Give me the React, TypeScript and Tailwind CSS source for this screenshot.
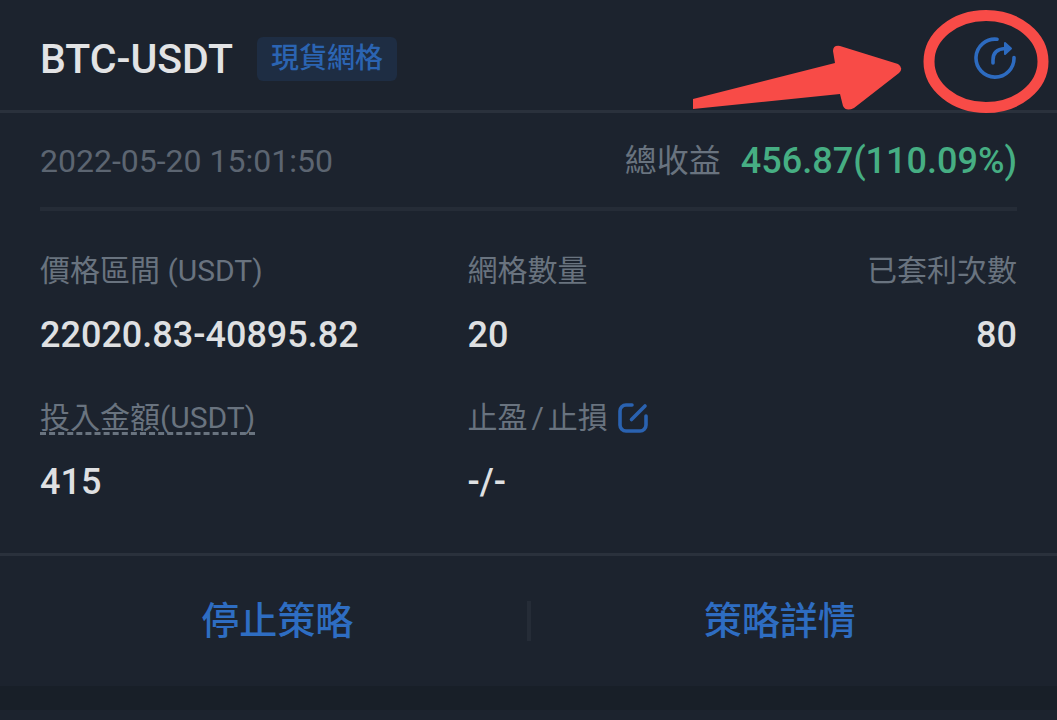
import type { ReactNode } from "react";

const strategy = {
  pair: "BTC-USDT",
  type: "現貨網格",
  createdAt: "2022-05-20 15:01:50",
  profit: "456.87(110.09%)",
  range: "22020.83-40895.82",
  grids: "20",
  arbitrages: "80",
  invested: "415",
  stops: "-/-",
};

function ShareIcon() {
  return (
    <svg width="44" height="44" viewBox="0 0 44 44" fill="none" aria-hidden="true">
      <path d="M24 2.200A19 19 0 1 0 41 20.500" stroke="#2d6bc0" strokeWidth="3.6" strokeLinecap="round" />
      <path d="M20 26v-3c0-7 4-11 12-11.500" stroke="#2d6bc0" strokeWidth="3.6" strokeLinecap="round" />
      <path d="M32 6l6 5.500-6 5.500z" fill="#2d6bc0" stroke="#2d6bc0" strokeWidth="2" strokeLinejoin="round" />
    </svg>
  );
}

function EditIcon() {
  return (
    <svg width="30" height="30" viewBox="0 0 30 30" fill="none" aria-hidden="true">
      <path
        d="M14 2H8a6 6 0 0 0-6 6v14a6 6 0 0 0 6 6h14a6 6 0 0 0 6-6v-9"
        stroke="#2a62b0"
        strokeWidth="3.6"
        strokeLinecap="round"
      />
      <path d="M13.500 16.500L27 3" stroke="#2a62b0" strokeWidth="3.6" strokeLinecap="round" />
    </svg>
  );
}

function Stat({ label, value, className = "" }: { label: ReactNode; value: string; className?: string }) {
  return (
    <div className={className}>
      <dt className="text-[30px] leading-10 text-[#69737f]">{label}</dt>
      <dd className="mt-6 text-[36px] leading-10 font-medium text-[#dfe0e2]">{value}</dd>
    </div>
  );
}

export default function App() {
  return (
    <main className="min-h-screen bg-[#1c232e] font-['Roboto','Noto_Sans_CJK_TC',sans-serif]">
      <article>
        <header className="relative flex items-center justify-between border-b-[3px] border-[#2a313c] px-10 pt-[37px] pb-[29px]">
          <div className="flex items-center gap-6">
            <h1 className="text-[41px] leading-[44px] font-medium text-[#e2e3e5]">{strategy.pair}</h1>
            <span className="rounded-md bg-[#1e2d43] px-3.5 py-1 text-[28px] leading-9 font-medium text-[#2b64b2]">
              {strategy.type}
            </span>
          </div>
          <button type="button" aria-label="分享">
            <ShareIcon />
          </button>

          {/* hint pointing at the share button */}
          <svg className="pointer-events-none absolute top-2 right-2" width="358" height="106" viewBox="0 0 358 106" fill="none" aria-hidden="true">
            <path d="M2 91L144 55L142 43Q142 37 149 38L207 56Q213 60 208 65L163 100Q155 104 152 98L149 86L2 101z" fill="#f84b47" />
            <ellipse cx="295" cy="53.500" rx="57" ry="46" stroke="#f84b47" strokeWidth="11" />
          </svg>
        </header>

        <section className="px-10">
          <div className="flex items-center justify-between border-b-4 border-[#252c37] pt-7 pb-[26px]">
            <time className="text-[32px] leading-10 text-[#5c6571]">{strategy.createdAt}</time>
            <p className="flex items-center gap-5 leading-10">
              <span className="text-[32px] text-[#69737f]">總收益</span>
              <strong className="text-[36px] font-medium text-[#46ae83]">{strategy.profit}</strong>
            </p>
          </div>

          <dl className="grid grid-cols-[7fr_5fr_4fr] gap-y-[43px] pt-10 pb-[51px]">
            <Stat label="價格區間 (USDT)" value={strategy.range} />
            <Stat label="網格數量" value={strategy.grids} />
            <Stat label="已套利次數" value={strategy.arbitrages} className="text-right" />
            <Stat
              label={
                <span className="underline decoration-dashed decoration-[3px] underline-offset-4 [text-decoration-skip-ink:none]">
                  投入金額(USDT)
                </span>
              }
              value={strategy.invested}
            />
            <Stat
              label={
                <span className="flex items-center gap-2.5">
                  <span>
                    止盈<span className="mx-1">/</span>止損
                  </span>
                  <button type="button" aria-label="編輯止盈止損">
                    <EditIcon />
                  </button>
                </span>
              }
              value={strategy.stops}
            />
          </dl>
        </section>

        <footer className="flex items-center border-t-[3px] border-[#2a313c] px-7 py-10 text-[38px] leading-[50px] font-medium text-[#2e6dc2]">
          <button type="button" className="flex-1">停止策略</button>
          <span className="h-10 w-1 bg-[#252c37]" />
          <button type="button" className="flex-1">策略詳情</button>
        </footer>
      </article>
      <div className="h-6 bg-[#181f28]" />
    </main>
  );
}
